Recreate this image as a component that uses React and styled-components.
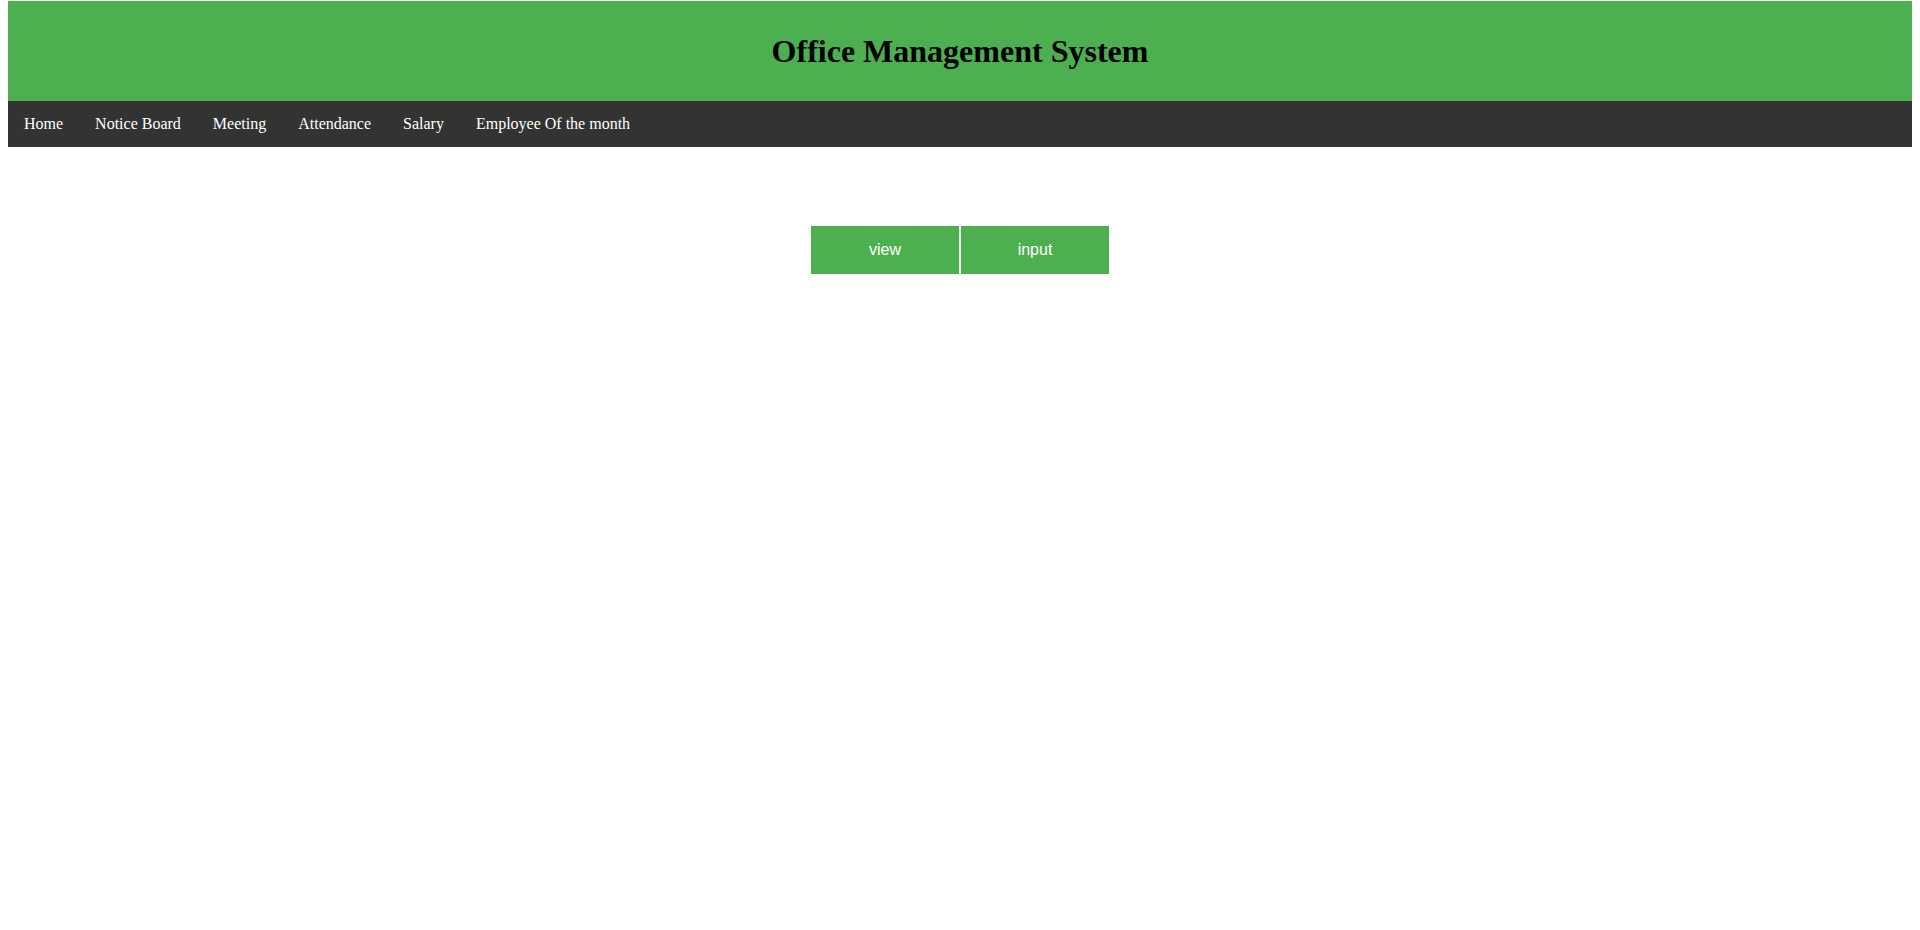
import styled, { createGlobalStyle } from "styled-components";

const GlobalStyle = createGlobalStyle`
  body {
    margin: 1px 8px 8px;
    background-color: #fff;
    font-family: "Liberation Serif", "Times New Roman", serif;
  }
`;

const Header = styled.header`
  background-color: #4caf50;
  height: 100px;
  display: flex;
  align-items: center;
  justify-content: center;
`;

const Title = styled.h1`
  margin: 0;
  font-size: 32px;
  font-weight: bold;
  color: #000;
`;

const TopNav = styled.nav`
  background-color: #333;
  display: flex;
`;

const NavLink = styled.a`
  display: block;
  color: #fff;
  text-decoration: none;
  font-size: 16px;
  line-height: 18px;
  padding: 14px 16px;
  cursor: pointer;

  &:hover {
    background-color: #ddd;
    color: #000;
  }
`;

const Main = styled.main`
  display: flex;
  justify-content: center;
  gap: 2px;
  padding-top: 79px;
`;

const TabButton = styled.button`
  width: 148px;
  height: 48px;
  border: none;
  background-color: #4caf50;
  color: #fff;
  font-family: "Liberation Sans", Arial, sans-serif;
  font-size: 16px;
  cursor: pointer;
`;

const links = [
  "Home",
  "Notice Board",
  "Meeting",
  "Attendance",
  "Salary",
  "Employee Of the month",
];

const App = () => {
  return (
    <>
      <GlobalStyle />
      <Header>
        <Title>Office Management System</Title>
      </Header>
      <TopNav>
        {links.map((label) => (
          <NavLink key={label}>{label}</NavLink>
        ))}
      </TopNav>
      <Main>
        <TabButton>view</TabButton>
        <TabButton>input</TabButton>
      </Main>
    </>
  );
};

export default App;
